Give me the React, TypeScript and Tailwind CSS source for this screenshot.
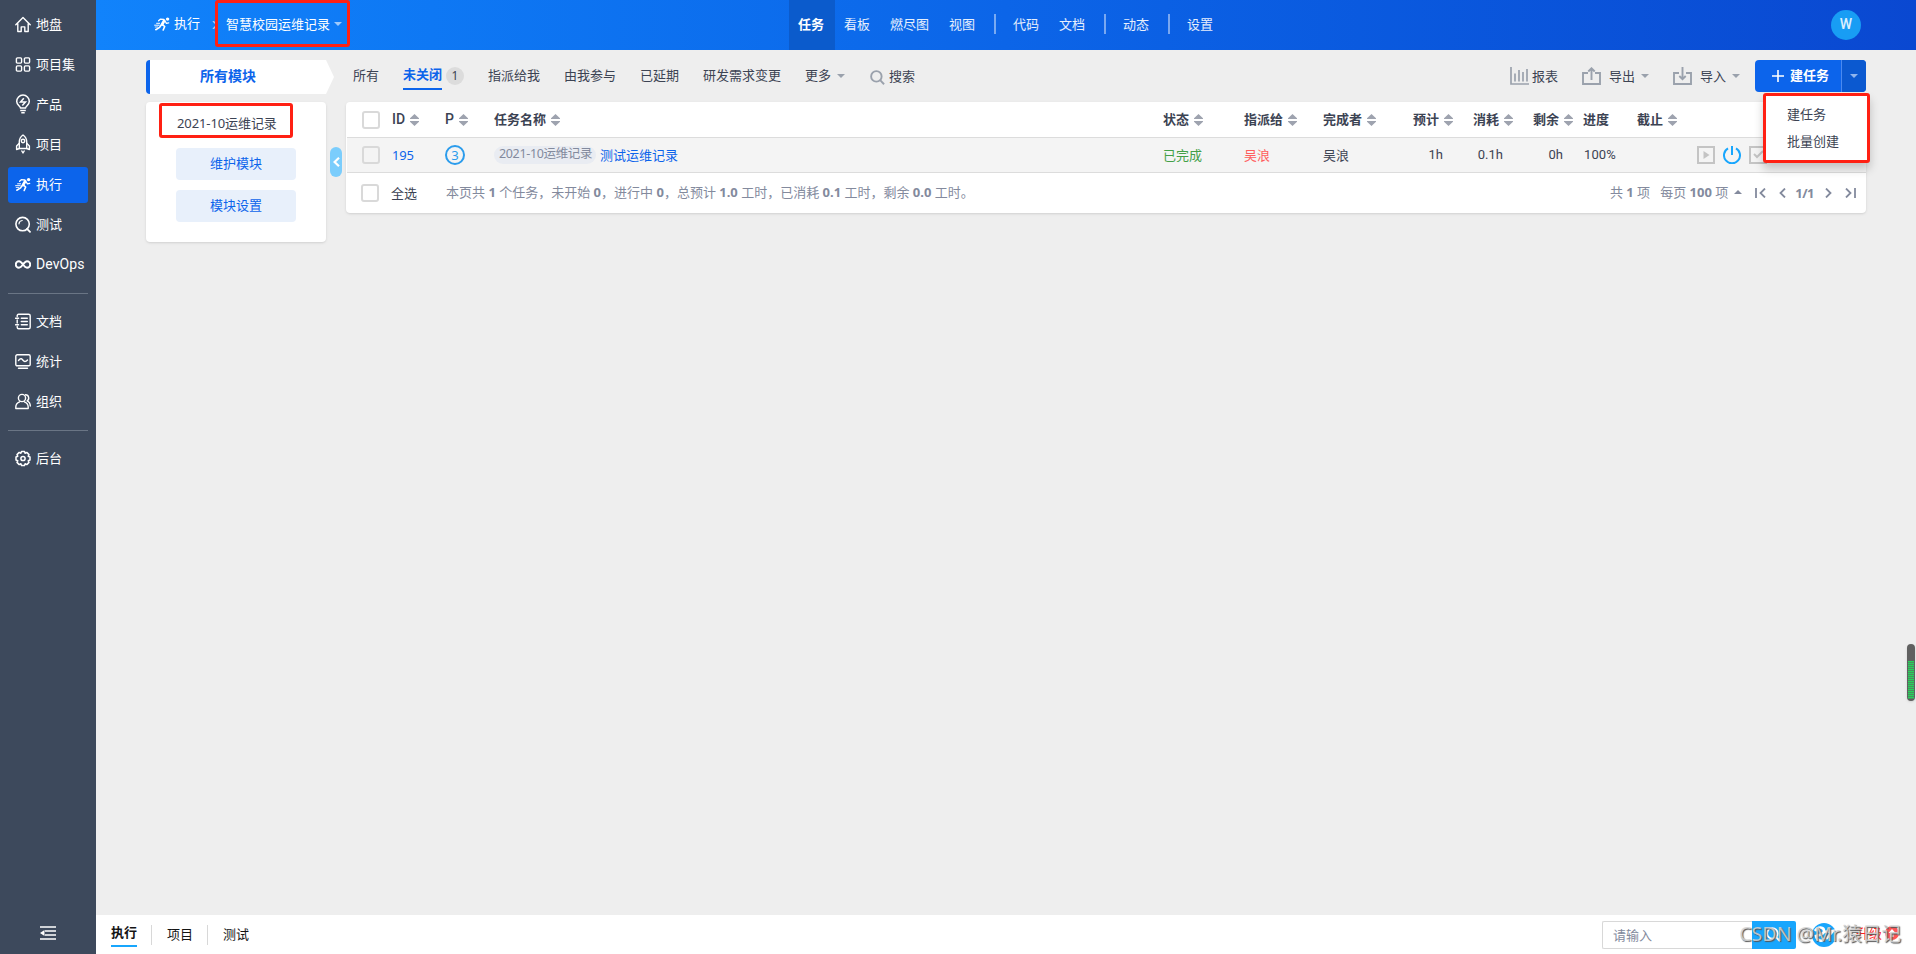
import React from 'react';
import clsx from 'clsx';

type IconProps = { className?: string };

const HomeIcon = ({ className }: IconProps) => (
  <svg viewBox="0 0 16 16" className={className} fill="none" stroke="currentColor" strokeWidth="1.4" strokeLinejoin="round" strokeLinecap="round">
    <path d="M.8 8.2 8 1l7.2 7.2M2.8 7v8h3.4v-4.6h3.6V15h3.4V7" />
  </svg>
);

const GridIcon = ({ className }: IconProps) => (
  <svg viewBox="0 0 16 16" className={className} fill="none" stroke="currentColor" strokeWidth="1.4">
    <rect x="1.4" y="1.4" width="5.2" height="5.2" rx="1" />
    <rect x="9.4" y="1.4" width="5.2" height="5.2" rx="1" />
    <rect x="1.4" y="9.4" width="5.2" height="5.2" rx="1" />
    <rect x="9.4" y="9.4" width="5.2" height="5.2" rx="1" />
  </svg>
);

const BulbIcon = ({ className }: IconProps) => (
  <svg viewBox="0 0 16 20" className={clsx(className, '!h-5')} fill="none" stroke="currentColor" strokeWidth="1.5">
    <path d="M5.5 14C5.2 12 1.7 10.800 1.700 7.500a6.300 6.500 0 0 1 12.600 0c0 3.300-3.500 4.500-3.800 6.500zM5.200 16.500h5.600M6.300 18.700h3.400" />
    <path d="M8.800 4.200 5.500 8h5L7.300 11.500" strokeWidth="1.500" />
  </svg>
);

const RocketIcon = ({ className }: IconProps) => (
  <svg viewBox="0 0 16 20" className={clsx(className, '!h-5')} fill="none" stroke="currentColor" strokeWidth="1.400" strokeLinejoin="round">
    <path d="M8 1c2.600 1.800 3.700 4.300 3.700 7v6.500H4.300V8C4.300 5.300 5.400 2.800 8 1z" />
    <path d="M4.300 9.300 1.600 12v3.600l2.700-1.100M11.700 9.300l2.700 2.700v3.600l-2.700-1.100M6.500 16.500 8 19l1.500-2.500" />
    <circle cx="8" cy="7" r="1.700" />
  </svg>
);

const RunIcon = ({ className }: IconProps) => (
  <svg viewBox="0 0 16 14" className={className} fill="none" stroke="currentColor" strokeLinecap="round" strokeLinejoin="round">
    <circle cx="13.600" cy="2.100" r="1.700" fill="currentColor" stroke="none" />
    <path d="M10.200 3.700 8 7.500" strokeWidth="2.700" />
    <path d="M9.800 2.500 6.300 2.200 4.600 3.800M11.300 4.500l1.100 1.800 2.300-.4" strokeWidth="1.300" />
    <path d="m8.800 7.800 1.900 1.700-1.500 3.500M7 8.300 5.600 10.400 1.800 12.700" strokeWidth="1.600" />
    <path d="M2.600 6.300h3M.6 8.200h4.600" strokeWidth="1" />
    <path d="M1.200 10h2.500" strokeWidth=".8" />
  </svg>
);

const TestIcon = ({ className }: IconProps) => (
  <svg viewBox="0 0 16 16" className={className} fill="none" stroke="currentColor" strokeLinecap="round">
    <circle cx="7.600" cy="7.600" r="6.700" strokeWidth="1.600" />
    <path d="M4 7.300A3.600 3.600 0 0 1 7.200 4" strokeWidth="1.200" />
    <path d="m12 12.300 3 3" strokeWidth="1.800" />
  </svg>
);

const InfinityIcon = ({ className }: IconProps) => (
  <svg viewBox="0 0 16 16" className={className} fill="none" stroke="currentColor" strokeWidth="1.900">
    <path d="M8 8c-1.500-2.100-2.500-3.200-4-3.200a3.200 3.200 0 0 0 0 6.400C5.500 11.200 6.500 10.100 8 8s2.500-3.200 4-3.200a3.200 3.200 0 0 1 0 6.400c-1.500 0-2.500-1.100-4-3.200z" />
  </svg>
);

const DocIcon = ({ className }: IconProps) => (
  <svg viewBox="0 0 16 16" className={className} fill="none" stroke="currentColor" strokeWidth="1.400" strokeLinecap="round">
    <path d="M2.200 3V2.200Q2.200.8 3.600.8h10Q15.200.8 15.200 2.200v11.600q0 1.500-1.600 1.500h-10q-1.400 0-1.400-1.500V13M2.200 6.500v3M.6 4.800h3M.6 11.200h3" />
    <path d="M6.300 4.800h6M6.300 8h6M6.300 11.200h6" />
  </svg>
);

const StatIcon = ({ className }: IconProps) => (
  <svg viewBox="0 0 16 16" className={className} fill="none" stroke="currentColor" strokeWidth="1.400" strokeLinecap="round">
    <rect x=".8" y="1.300" width="14.400" height="11" rx="1.400" />
    <path d="M3.500 7C5.800 4 7 5.500 8 6.800s2.500 2 4.500-.3M3.500 14.700h9" />
  </svg>
);

const OrgIcon = ({ className }: IconProps) => (
  <svg viewBox="0 0 16 16" className={className} fill="none" stroke="currentColor" strokeWidth="1.400" strokeLinecap="round" strokeLinejoin="round">
    <circle cx="7" cy="4.500" r="3.600" />
    <path d="M.8 15v-1.500C.8 11 2.500 9.200 4.600 8.300M9.400 8.300c2.100.9 3.800 2.700 3.800 5.200V15H.8M10.500 1.300c3.600.2 4.200 4.500 1.600 6 2.200 1 3.200 3 3.200 5.200" />
  </svg>
);

const GearIcon = ({ className }: IconProps) => (
  <svg viewBox="0 0 16 16" className={className} fill="none" stroke="currentColor" strokeWidth="1.500" strokeLinejoin="round">
    <path d="M6.500.9h3l.6 1.800 1.700-.8 2.200 2.200-.8 1.700 1.800.7v3l-1.800.7.8 1.700-2.200 2.200-1.700-.8-.6 1.800h-3l-.6-1.800-1.700.8L2 11.900l.8-1.700L1 9.500v-3l1.800-.7L2 4.100l2.200-2.200 1.700.8z" />
    <circle cx="8" cy="8" r="2.100" />
  </svg>
);

const SearchIcon = ({ className }: IconProps) => (
  <svg viewBox="0 0 16 16" className={className} fill="none" stroke="currentColor" strokeWidth="2">
    <circle cx="6.800" cy="6.800" r="5.600" />
    <path d="m10.800 10.800 4.200 4.400" />
  </svg>
);

const ChartIcon = ({ className }: IconProps) => (
  <svg viewBox="0 0 19 18" className={className} fill="none" stroke="currentColor" strokeWidth="1.700">
    <path d="M1 0v17h18M5 6.500v8M9 3v11.500M13 5v9.500M17 2v12.500" />
  </svg>
);

const ShareIcon = ({ down }: { down?: boolean }) => (
  <svg viewBox="0 0 19 18" className="h-[18px] w-[19px] shrink-0 text-[#9aa1ac]" fill="none" stroke="currentColor" strokeWidth="1.900">
    <path d="M6 6H1v11h17V6h-5" />
    {down ? <path d="M9.500 0v12M6.300 9l3.200 3.200L12.700 9" /> : <path d="M9.500 13V1.500M6.300 4.500l3.200-3.200 3.200 3.200" />}
  </svg>
);

const Caret = ({ className, up }: { className?: string; up?: boolean }) => (
  <svg viewBox="0 0 8 4" className={clsx('h-1 w-2 shrink-0', className)} fill="currentColor">
    {up ? <path d="M0 4 4 0l4 4z" /> : <path d="M0 0h8L4 4z" />}
  </svg>
);

const Sort = () => (
  <svg viewBox="0 0 9 12" className="ml-[5px] mt-0.5 h-3 w-[9px] shrink-0 text-[#9ea3af]" fill="currentColor">
    <path d="M4.500 0 9 4.200V5H0v-.8zM4.500 12 9 7.800V7H0v.8z" />
  </svg>
);

const Checkbox = () => <span className="size-[18px] shrink-0 rounded-[3px] border-2 border-[#d9d9d9]" />;

const sideMenu = [
  [
    { label: '地盘', Icon: HomeIcon },
    { label: '项目集', Icon: GridIcon },
    { label: '产品', Icon: BulbIcon },
    { label: '项目', Icon: RocketIcon },
    { label: '执行', Icon: RunIcon, active: true },
    { label: '测试', Icon: TestIcon },
    { label: 'DevOps', Icon: InfinityIcon },
  ],
  [
    { label: '文档', Icon: DocIcon },
    { label: '统计', Icon: StatIcon },
    { label: '组织', Icon: OrgIcon },
  ],
  [{ label: '后台', Icon: GearIcon }],
];

const navGroups = [['任务', '看板', '燃尽图', '视图'], ['代码', '文档'], ['动态'], ['设置']];

const Sidebar = () => (
  <aside className="flex w-24 shrink-0 flex-col bg-[#3d495c] px-2 pt-[7px] text-white">
    {sideMenu.map((group, i) => (
      <div key={i} className={clsx('flex flex-col gap-1', i === 1 && 'mt-2.5 border-t border-[#6a7585] pt-[9px]', i === 2 && 'mt-[11px] border-t border-[#6a7585] pt-[9px]')}>
        {group.map(({ label, Icon, active }: any) => (
          <div key={label} className={clsx('flex h-9 items-center rounded-[3px] pl-[7px]', i === 0 && 'pb-0.5', active && 'bg-[#0c64eb]')}>
            <Icon className="h-[17px] w-4 shrink-0" />
            <span className={clsx('ml-[5px] whitespace-nowrap', label === 'DevOps' && 'font-[Roboto] text-sm tracking-[0.1px]')}>{label}</span>
          </div>
        ))}
      </div>
    ))}
    <svg viewBox="0 0 16 14" className="mb-[14px] mt-auto h-[14px] w-4 self-center" fill="none" stroke="currentColor" strokeWidth="1.700">
      <path d="M0 1h16M5 5h11M5 9h11M0 13h16" />
      <path d="M4.500 4v6L0 7z" fill="currentColor" stroke="none" />
    </svg>
  </aside>
);

const Header = () => (
  <header className="flex h-[50px] shrink-0 items-center bg-linear-to-r from-[#1183fb] via-[#0c65e8] to-[#0a48d1] text-white">
    <div className="flex w-[693px] items-center pb-1 pl-[58px]">
      <RunIcon className="mt-px h-[14px] w-4" />
      <span className="ml-[4px]">执行</span>
      <svg viewBox="0 0 6 8" className="ml-3 mt-1 h-2 w-1.5 opacity-60" fill="none" stroke="currentColor" strokeWidth="1.500">
        <path d="m1 0 4 4-4 4" />
      </svg>
      <span className="ml-2 mt-0.5">智慧校园运维记录</span>
      <Caret className="ml-1 mt-0.5 opacity-60" />
    </div>
    <nav className="flex h-full items-center">
      {navGroups.map((group, i) => (
        <React.Fragment key={i}>
          {i > 0 && <span className="mx-2 mb-0.5 h-5 w-0.5 bg-white/45" />}
          {group.map((label) => (
            <span key={label} className={clsx('flex h-full items-center pb-[3px] pl-[9px] pr-[11px]', label === '任务' ? 'bg-[#0b5bcc] font-bold' : 'text-white/90')}>
              {label}
            </span>
          ))}
        </React.Fragment>
      ))}
    </nav>
    <span className="ml-auto mr-[55px] flex size-[30px] items-center justify-center rounded-full bg-[#189df4] pb-0.5 font-[Roboto] text-sm font-medium text-white/85">W</span>
  </header>
);

const ModulePanel = () => (
  <div className="flex w-[200px] shrink-0 flex-col">
    <div className="mt-2.5 flex h-[34px] w-[188px] items-stretch">
      <div className="flex w-[180px] items-center justify-center rounded-l-[4px] border-l-4 border-[#0c64eb] bg-white pb-0.5 pr-5 text-sm font-bold text-[#0c64eb]">所有模块</div>
      <svg viewBox="0 0 8 34" className="h-[34px] w-2" fill="#fff">
        <path d="M0 0 8 17 0 34z" />
      </svg>
    </div>
    <div className="mt-2 flex items-start">
      <div className="relative flex h-[140px] w-[180px] flex-col items-center rounded-[4px] bg-white shadow-sm">
        <div className="mt-3 h-[22px] w-[118px] whitespace-nowrap leading-[19px] tracking-[-0.1px]">2021-10运维记录</div>
        <button className="mt-3 h-8 w-[120px] rounded-[4px] bg-[#e8f0fb] pb-[3px] text-[#0c64eb]">维护模块</button>
        <button className="mt-2.5 h-8 w-[120px] rounded-[4px] bg-[#e8f0fb] pb-[3px] text-[#0c64eb]">模块设置</button>
        <div className="absolute left-[13px] top-px h-[35px] w-[134px] rounded-[3px] border-[3px] border-[#ff2013]" />
      </div>
      <div className="ml-1 mt-[45px] flex h-[30px] w-3 items-center justify-center rounded-full bg-[#7bcdfc] text-white">
        <svg viewBox="0 0 7 10" className="h-2.5 w-[7px]" fill="none" stroke="currentColor" strokeWidth="2.200">
          <path d="M6 .8 1.600 5 6 9.200" />
        </svg>
      </div>
    </div>
  </div>
);

const Toolbar = () => (
  <div className="relative flex h-[52px] shrink-0 items-center pl-[7px]">
    <div className="flex items-center gap-6 pb-0.5">
      <span>所有</span>
      <span className="flex items-center">
        <span className="mt-0.5 flex h-[27px] flex-col border-b-2 border-[#0c64eb] font-bold leading-[22px] text-[#0c64eb]">未关闭</span>
        <span className="ml-1 mt-0.5 flex size-[18px] items-center justify-center rounded-full bg-[#dcdcdc] text-[12px]">1</span>
      </span>
      <span>指派给我</span>
      <span>由我参与</span>
      <span>已延期</span>
      <span>研发需求变更</span>
      <span className="flex items-center">
        更多
        <Caret className="ml-1.5 mt-0.5 text-[#9aa1ac]" />
      </span>
    </div>
    <SearchIcon className="ml-[25px] mt-0.5 size-[15px] text-[#9aa1ac]" />
    <span className="ml-1">搜索</span>
    <div className="ml-auto flex items-center">
      <ChartIcon className="h-[18px] w-[19px] text-[#9aa1ac]" />
      <span className="ml-[3px]">报表</span>
      <span className="ml-6 flex">
        <ShareIcon />
      </span>
      <span className="ml-2">导出</span>
      <Caret className="ml-1.5 text-[#9aa1ac]" />
      <span className="ml-6 flex">
        <ShareIcon down />
      </span>
      <span className="ml-2">导入</span>
      <Caret className="ml-1.5 text-[#9aa1ac]" />
      <div className="ml-[15px] flex h-8 w-[111px] overflow-hidden rounded-[4px] bg-[#0c64eb] font-bold text-white">
        <span className="flex w-[87px] items-center border-r border-[#4a8af0] pl-[17px]">
          <svg viewBox="0 0 12 12" className="mr-1.5 size-3" stroke="currentColor" strokeWidth="1.600">
            <path d="M0 6h12M6 0v12" />
          </svg>
          <span className="pb-[3px]">建任务</span>
        </span>
        <span className="flex flex-1 items-center justify-center bg-[#0b59d0]">
          <Caret className="text-[#8fb5ee]" />
        </span>
      </div>
    </div>
    <div className="absolute right-[-4px] top-[43px] z-10 flex h-[70px] w-[107px] flex-col rounded-[3px] border-[3px] border-[#ff2013] bg-white pl-[21px] pt-[5px] leading-[27px] shadow-[0_6px_10px_rgba(0,0,0,0.2)]">
      <span>建任务</span>
      <span>批量创建</span>
    </div>
  </div>
);

const columns = 'grid grid-cols-[46px_53px_49px_669px_81px_79px_90px_60px_60px_50px_54px_60px_1fr] items-center';

const TaskTable = () => (
  <div className="flex h-[111px] shrink-0 flex-col rounded-[4px] bg-white shadow-sm">
    <div className={clsx(columns, 'h-[35px] font-bold')}>
      <span className="flex pl-4">
        <Checkbox />
      </span>
      {['ID', 'P', '任务名称', '状态', '指派给', '完成者', '预计', '消耗', '剩余', '进度', '截止'].map((name) => (
        <span key={name} className={clsx('flex items-center whitespace-nowrap pb-px', /[A-Z]/.test(name) && 'font-[Roboto] text-sm !font-medium')}>
          {name}
          {name !== '进度' && <Sort />}
        </span>
      ))}
      {/* only its first stroke shows beside the open menu */}
      <span className="pl-[68px]">操作</span>
    </div>
    <div className={clsx(columns, 'ml-px h-9 border-y border-[#dcdcdc] bg-[#f4f4f4]')}>
      <span className="flex pl-[15px]">
        <Checkbox />
      </span>
      <span className="-ml-px text-[#0c64eb] tracking-[-0.2px]">195</span>
      <span className="-ml-px flex size-5 items-center justify-center rounded-full border-2 border-[#2b9cec] text-[#2b9cec]">3</span>
      <span className="-ml-px flex items-center whitespace-nowrap">
        <span className="mr-1 h-[18px] w-[102px] rounded-full bg-[#e9ecf2] pl-[5px] text-[12.500px] leading-[16px] tracking-[-0.350px] text-[#838a9d]">2021-10运维记录</span>
        <span className="text-[#0c64eb]">测试运维记录</span>
      </span>
      <span className="-ml-px pb-px text-[#43a047]">已完成</span>
      <span className="-ml-px pb-px text-[#ff5d5d]">吴浪</span>
      <span className="-ml-px pb-px">吴浪</span>
      <span className="pr-[31px] text-right font-[Roboto]">1h</span>
      <span className="pr-[31px] text-right font-[Roboto]">0.1h</span>
      <span className="pr-[21px] text-right font-[Roboto]">0h</span>
      <span className="font-[Roboto] tracking-[0.1px]">100%</span>
      <span />
      <span className="-ml-px flex items-center">
        <svg viewBox="0 0 18 18" className="size-[18px] text-[#c4c4c4]" fill="none" stroke="currentColor" strokeWidth="2">
          <path d="M1 1h16v16H1z" />
          <path d="M6.500 5v8l6-4z" fill="currentColor" stroke="none" />
        </svg>
        <svg viewBox="0 0 18 18" className="ml-2 size-[18px] text-[#18a6fd]" fill="none" stroke="currentColor" strokeWidth="2">
          <path d="M5 2.400a8 8 0 1 0 8 0M9 0v9" />
        </svg>
        <svg viewBox="0 0 18 18" className="ml-2 size-[18px] text-[#c4c4c4]" fill="none" stroke="currentColor" strokeWidth="2">
          <path d="M1 1h16v16H1zM5 8l3 3 6-6" />
        </svg>
      </span>
    </div>
    <div className="flex flex-1 items-center pl-[15px] pr-[10px] text-[#838a9d]">
      <Checkbox />
      <span className="ml-3 text-[#3c4353]">全选</span>
      <span className="ml-[29px] whitespace-pre pb-[3px]">
        本页共 <b>1</b> 个任务，未开始 <b>0</b>，进行中 <b>0</b>，总预计 <b>1.0</b> 工时，已消耗 <b>0.1</b> 工时，剩余 <b>0.0</b> 工时。
      </span>
      <div className="ml-auto flex items-center whitespace-nowrap pb-[3px]">
        <span>
          共 <b>1</b> 项
        </span>
        <span className="ml-2.5">
          每页 <b>100</b> 项
        </span>
        <Caret up className="ml-1.5" />
        <svg viewBox="0 0 11 10" className="ml-[13px] mt-0.5 h-2.5 w-[11px]" fill="none" stroke="currentColor" strokeWidth="1.800">
          <path d="M1 0v10M10 .5 5.500 5 10 9.500" />
        </svg>
        <svg viewBox="0 0 7 10" className="ml-[13px] mt-0.5 h-2.5 w-[7px]" fill="none" stroke="currentColor" strokeWidth="1.800">
          <path d="M6 .5 1.500 5 6 9.500" />
        </svg>
        <b className="ml-[9px] mt-0.5 tracking-[-0.5px]">1/1</b>
        <svg viewBox="0 0 7 10" className="ml-[11px] mt-0.5 h-2.5 w-[7px]" fill="none" stroke="currentColor" strokeWidth="1.800">
          <path d="M1 .5 5.500 5 1 9.500" />
        </svg>
        <svg viewBox="0 0 11 10" className="ml-[13px] mt-0.5 h-2.5 w-[11px]" fill="none" stroke="currentColor" strokeWidth="1.800">
          <path d="M10 0v10M1 .5 5.500 5 1 9.500" />
        </svg>
      </div>
    </div>
  </div>
);

const Footer = () => (
  <footer className="relative flex h-[39px] shrink-0 items-center bg-white pl-[15px] text-[#141414]">
    <span className="h-[25px] border-b-2 border-[#18a6fd] font-bold leading-5">执行</span>
    <span className="ml-3.5 h-5 w-px bg-[#d8d8d8]" />
    <span className="ml-[15px] pb-0.5">项目</span>
    <span className="ml-3.5 h-5 w-px bg-[#d8d8d8]" />
    <span className="ml-[15px] pb-0.5">测试</span>
    <div className="ml-auto mr-[17px] flex items-center">
      <div className="flex h-7 w-[150px] items-center rounded-l-[2px] border border-r-0 border-[#d8d8d8] pl-2.5 text-[#838a9d]">请输入</div>
      <div className="flex h-7 w-11 items-center justify-center rounded-r-[2px] bg-[#18a6fd] text-white">
        <SearchIcon className="size-[15px]" />
      </div>
      <svg viewBox="0 0 24 24" className="ml-4 size-6" fill="none" stroke="#fff" strokeWidth="2.600">
        <circle cx="12" cy="12" r="12" fill="#18a6fd" stroke="none" />
        <path d="M3 8c3-5 9-4 9 0 0 3-4 4-8 5 1 5 6 6 9 3M12 9l9-1-7 8" />
      </svg>
      <span className="ml-5 pb-1 text-[#ff1f1f]">升级</span>
      <svg viewBox="0 0 14 14" className="mb-1 ml-[3px] size-[14px]">
        <circle cx="7" cy="7" r="7" fill="#ff5757" />
        <path d="M7 3 3.500 7h2v4h3V7h2z" fill="#fff" />
      </svg>
    </div>
    <span className="absolute right-[15px] top-[5px] whitespace-nowrap text-[19.600px] leading-[28px] text-[#d4d4d4]/85 [text-shadow:1px_1px_1px_#555]">CSDN @Mr.猿日记</span>
  </footer>
);

const App: React.FC = () => (
  <div className="relative flex h-[954px] w-[1916px] overflow-hidden bg-[#eeeeee] font-['Noto_Sans','Noto_Sans_CJK_SC',sans-serif] text-[13px] leading-5 text-[#3c4353]">
    <Sidebar />
    <div className="flex min-w-0 flex-1 flex-col">
      <Header />
      <main className="flex flex-1 pl-[50px] pr-[50px]">
        <ModulePanel />
        <div className="flex min-w-0 flex-1 flex-col">
          <Toolbar />
          <TaskTable />
        </div>
      </main>
      <Footer />
    </div>
    <div className="absolute left-[215px] top-0 h-[47px] w-[135px] rounded-[3px] border-[3px] border-[#ff2013]" />
    <div className="absolute right-px top-[644px] flex h-[57px] w-2 flex-col justify-end overflow-hidden rounded-full bg-[#606060] px-px pb-0.5 shadow">
      <div className="h-[38px] bg-[repeating-linear-gradient(to_bottom,#24d65a_0_1px,#4f8a60_1px_2px)]" />
    </div>
  </div>
);

export default App;
